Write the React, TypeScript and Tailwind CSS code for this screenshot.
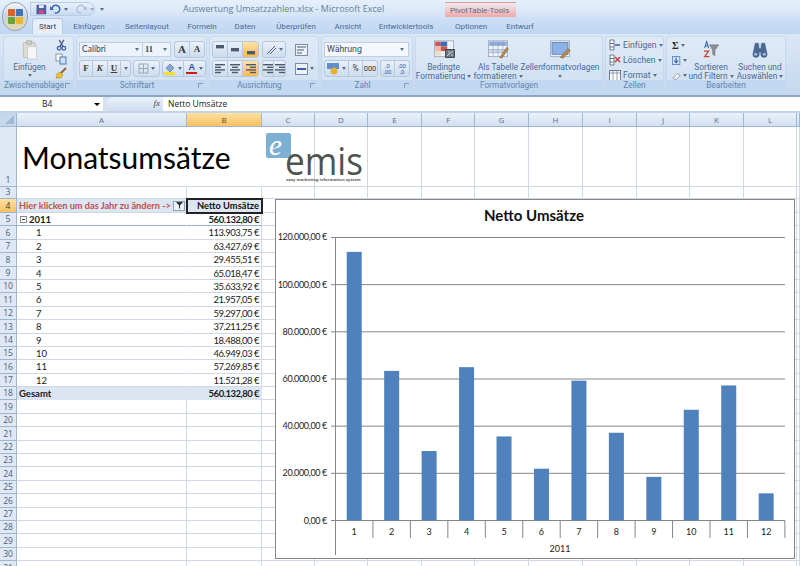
import React from "react";

const UI = "font-['Roboto',sans-serif]";
const COLS = [
  ["A", 170], ["B", 75], ["C", 53], ["D", 53], ["E", 54], ["F", 53], ["G", 54], ["H", 54], ["I", 54], ["J", 53], ["K", 54], ["L", 53], ["", 3],
] as const;
const TABS = [
  ["Einfügen", 52], ["Seitenlayout", 64], ["Formeln", 46], ["Daten", 40], ["Überprüfen", 62], ["Ansicht", 42], ["Entwicklertools", 74], ["Optionen", 56], ["Entwurf", 42],
] as const;
const MONTHS = [
  ["1", "113.903,75 €", 113903], ["2", "63.427,69 €", 63427], ["3", "29.455,51 €", 29455], ["4", "65.018,47 €", 65018],
  ["5", "35.633,92 €", 35633], ["6", "21.957,05 €", 21957], ["7", "59.297,00 €", 59297], ["8", "37.211,25 €", 37211],
  ["9", "18.488,00 €", 18488], ["10", "46.949,03 €", 46949], ["11", "57.269,85 €", 57269], ["12", "11.521,28 €", 11521],
] as const;
const CHART_FONT = "Lato, sans-serif";

function Caret({ className = "" }: { className?: string }) {
  return <span className={`inline-block w-0 h-0 align-middle border-x-[2px] border-x-transparent border-t-[3px] border-t-[#5a6f8c] ${className}`} />;
}

function Group({ width, label, launcher, children }: { width: number; label: string; launcher?: boolean; children: React.ReactNode }) {
  return (
    <div style={{ width }} className="shrink-0 flex flex-col rounded-[3px] border border-[#c5d8ee] bg-gradient-to-b from-[#dfeaf7] to-[#cfe0f3]">
      <div className="flex-1 min-h-0">{children}</div>
      <div className={`relative h-[11px] rounded-b-[3px] bg-[#c2d8f0] text-center text-[8.3px] leading-[11px] text-[#6486ad] ${launcher ? "pr-[9px]" : ""}`}>
        {label}
        {launcher && <span className="absolute right-[3px] top-[3px] w-[5px] h-[5px] border-l border-t border-[#7f9bbd]" />}
      </div>
    </div>
  );
}

function Btn({ width, children, active }: { width: number; children?: React.ReactNode; active?: boolean }) {
  return (
    <div style={{ width }} className={`h-[15px] flex items-center justify-center gap-[2px] border-r border-[#b4c8e0] last:border-r-0 text-[9px] text-[#3a3a3a] ${active ? "bg-gradient-to-b from-[#fde3a8] to-[#f8b84e]" : ""}`}>
      {children}
    </div>
  );
}

function BtnRow({ children }: { children: React.ReactNode }) {
  return <div className="flex rounded-[3px] border border-[#b4c8e0] bg-gradient-to-b from-[#eaf1fa] to-[#cddcef] overflow-hidden">{children}</div>;
}

function Lines({ kind }: { kind: "top" | "mid" | "bot" | "l" | "c" | "r" }) {
  const rows: Record<string, number[][]> = {
    top: [[1, 9], [1, 9], [1, 9]],
    mid: [[1, 9], [1, 9], [1, 9]],
    bot: [[1, 9], [1, 9], [1, 9]],
    l: [[0, 10], [0, 6], [0, 10], [0, 6]],
    c: [[0, 10], [2, 8], [0, 10], [2, 8]],
    r: [[0, 10], [4, 10], [0, 10], [4, 10]],
  };
  const y0 = kind === "top" ? 0 : kind === "mid" ? 3 : kind === "bot" ? 6 : 0;
  return (
    <svg width="10" height="10" viewBox="0 0 10 10">
      {rows[kind].map(([a, b], i) => (
        <rect key={i} x={a} y={kind === "top" || kind === "mid" || kind === "bot" ? y0 + i : i * 2.6} width={b - a} height="1.4" fill="#4d5a6b" />
      ))}
    </svg>
  );
}

function StyleIcon({ kind }: { kind: number }) {
  return (
    <svg width="24" height="19" viewBox="0 0 30 24" preserveAspectRatio="none">
      <rect x="3" y="1" width="24" height="20" fill="#eef3fa" stroke="#9aa8b8" />
      {kind === 0 && (
        <>
          <rect x="4" y="2" width="7" height="6" fill="#c9584f" /><rect x="11" y="2" width="8" height="6" fill="#3a6fb8" />
          <rect x="4" y="8" width="7" height="6" fill="#f0b8a8" /><rect x="11" y="8" width="8" height="6" fill="#c9584f" />
          <rect x="4" y="14" width="7" height="6" fill="#e8e0c0" />
          <rect x="17" y="12" width="11" height="10" fill="#6b7684" stroke="#333" /><path d="M19 20l7-6M20 15h2M24 19h2" stroke="#fff" />
        </>
      )}
      {kind === 1 && (
        <>
          <rect x="4" y="2" width="22" height="5" fill="#8faadc" />
          <rect x="4" y="12" width="22" height="4" fill="#c9d8ee" />
          <path d="M3 7h24M3 12h24M3 16h24M9 1v20M15 1v20M21 1v20" stroke="#8d9db5" strokeWidth=".7" />
          <path d="M17 22l9-13 2 2-8 12z" fill="#b98a4e" stroke="#6a5230" strokeWidth=".5" />
        </>
      )}
      {kind === 2 && (
        <>
          <rect x="5" y="3" width="20" height="15" fill="#8fb2e6" stroke="#4f79b5" />
          <path d="M15 22l10-11 3 2-9 10z" fill="#b98a4e" stroke="#6a5230" strokeWidth=".5" />
        </>
      )}
    </svg>
  );
}

function Ribbon() {
  const big = "flex flex-col items-center text-[8.3px] leading-[8.5px] text-center text-[#4a6a94]";
  return (
    <div className="h-[63px] flex gap-[2px] px-[3px] pt-[2px] pb-[3px] bg-gradient-to-b from-[#dbe7f6] to-[#c4d8ef] border-b-[2px] border-[#8ba6c7]">
      <Group width={71} label="Zwischenablage" launcher>
        <div className="flex h-full">
          <div className="w-[51px] flex flex-col items-center pt-[3px]">
            <svg width="18" height="20" viewBox="0 0 20 24">
              <rect x="2" y="3" width="14" height="18" rx="1" fill="#dedbd2" stroke="#b8b8b0" />
              <rect x="6" y="1" width="6" height="4" fill="#d0ccc0" stroke="#b0b0a8" />
              <path d="M9 8h9v15H7V8z" fill="#f6f6f6" stroke="#c0c6d0" />
            </svg>
            <div className="text-[8.3px] leading-[10px] mt-[2px] text-[#4a6a94]">Einfügen</div>
            <Caret className="mt-[2px]" />
          </div>
          <div className="flex flex-col items-center gap-[2px] pt-[2px]">
            <svg width="11" height="12" viewBox="0 0 11 13"><path d="M3 1l4 7M8 1L4 8" stroke="#55617a" strokeWidth="1.4" /><circle cx="3" cy="10" r="2" fill="none" stroke="#3a5fa8" strokeWidth="1.4" /><circle cx="8" cy="10" r="2" fill="none" stroke="#3a5fa8" strokeWidth="1.4" /></svg>
            <svg width="12" height="12" viewBox="0 0 12 12"><rect x="1" y="1" width="6" height="7" fill="#fff" stroke="#8a97a8" /><rect x="5" y="4" width="6" height="7" fill="#cfe0f5" stroke="#4f79b5" /></svg>
            <svg width="12" height="12" viewBox="0 0 12 12"><path d="M11 1L6 6" stroke="#8a6a30" strokeWidth="2" /><path d="M2 7l3-2 3 3-2 3-5 0z" fill="#f0c040" stroke="#a88020" strokeWidth=".6" /></svg>
          </div>
        </div>
      </Group>
      <Group width={131} label="Schriftart" launcher>
        <div className="flex flex-col gap-[2px] pt-[4px] pl-[2px]">
          <div className="flex items-center">
            <div className="w-[64px] h-[15px] flex items-center justify-between pl-[2px] pr-[3px] bg-[#edf3fb] border border-[#c0d0e4] text-[8.5px] text-[#3a4656]"><span className="font-['Lato',sans-serif]">Calibri</span><Caret /></div>
            <div className="w-[28px] h-[15px] flex items-center justify-between pl-[2px] pr-[3px] bg-[#edf3fb] border border-l-0 border-[#c0d0e4] text-[8.5px] font-['Liberation_Serif',serif] font-bold text-[#3a4656]">11<Caret /></div>
            <div className="ml-[3px]"><BtnRow>
              <Btn width={15}><span className="font-['Liberation_Serif',serif] font-bold text-[11px] leading-none">A</span></Btn>
              <Btn width={14}><span className="font-['Liberation_Serif',serif] font-bold text-[9px] leading-none">A</span></Btn>
            </BtnRow></div>
          </div>
          <div className="flex items-center gap-[2px]">
            <BtnRow>
              <Btn width={13}><span className="font-['Liberation_Serif',serif] font-bold">F</span></Btn>
              <Btn width={15}><span className="font-['Liberation_Serif',serif] font-bold italic">K</span></Btn>
              <Btn width={14}><span className="font-['Liberation_Serif',serif] font-bold underline">U</span></Btn>
              <Btn width={9}><Caret /></Btn>
            </BtnRow>
            <BtnRow>
              <Btn width={25}>
                <svg width="11" height="11" viewBox="0 0 11 11"><path d="M1 1h9v9H1zM5.500 1v9M1 5.500h9" fill="none" stroke="#9aa8bc" /></svg>
                <Caret />
              </Btn>
            </BtnRow>
            <BtnRow>
              <Btn width={22}>
                <svg width="12" height="12" viewBox="0 0 12 12"><path d="M6 1l4 4-4 4-4-4z" fill="#8aa8d0" stroke="#556" strokeWidth=".5" /><rect x="0" y="9" width="11" height="3" fill="#f5e020" /></svg>
                <Caret />
              </Btn>
              <Btn width={21}>
                <span className="flex flex-col items-center"><span className="text-[#2a4f9a] font-bold text-[9px] leading-[8px] font-['Liberation_Sans',sans-serif]">A</span><span className="w-[11px] h-[2px] bg-[#d01818] mt-[1px]" /></span>
                <Caret />
              </Btn>
            </BtnRow>
          </div>
        </div>
      </Group>
      <Group width={110} label="Ausrichtung" launcher>
        <div className="flex gap-[3px] pt-[4px] pl-[2px]">
          <div className="flex flex-col gap-[2px]">
            <BtnRow><Btn width={15}><Lines kind="top" /></Btn><Btn width={15}><Lines kind="mid" /></Btn><Btn width={15} active><Lines kind="bot" /></Btn></BtnRow>
            <BtnRow><Btn width={15}><Lines kind="l" /></Btn><Btn width={15}><Lines kind="c" /></Btn><Btn width={15} active><Lines kind="r" /></Btn></BtnRow>
          </div>
          <div className="flex flex-col gap-[2px]">
            <BtnRow><Btn width={22}><svg width="11" height="11" viewBox="0 0 11 11"><path d="M1 10l8-8M4 10l6-6" stroke="#55617a" /></svg><Caret /></Btn></BtnRow>
            <BtnRow><Btn width={11}><Lines kind="r" /></Btn><Btn width={11}><Lines kind="r" /></Btn></BtnRow>
          </div>
          <div className="flex flex-col gap-[2px] pl-[6px]">
            <div className="h-[17px] flex items-center"><svg width="13" height="12" viewBox="0 0 13 12"><rect x=".5" y=".5" width="12" height="11" fill="#eef3fa" stroke="#7d8da3" /><path d="M2 3h9M2 6h7M2 9h5" stroke="#4d5a6b" /></svg></div>
            <div className="h-[17px] flex items-center gap-[2px]"><svg width="13" height="12" viewBox="0 0 13 12"><rect x=".5" y=".5" width="12" height="11" fill="#eef3fa" stroke="#7d8da3" /><path d="M2 6h9" stroke="#3a5fa8" strokeWidth="2" /></svg><Caret /></div>
          </div>
        </div>
      </Group>
      <Group width={92} label="Zahl" launcher>
        <div className="flex flex-col gap-[3px] pt-[5px] pl-[2px]">
          <div className="w-[85px] h-[15px] flex items-center justify-between pl-[2px] pr-[4px] bg-[#f4f7fc] border border-[#c0d0e4] text-[8.8px] text-[#3a4656]">Währung<Caret /></div>
          <div className="flex gap-[2px]">
            <BtnRow>
              <Btn width={24}><svg width="13" height="12" viewBox="0 0 13 12"><rect x="0" y="0" width="12" height="6" fill="#5f8fd0" /><circle cx="7" cy="8" r="3.500" fill="#e8b030" /></svg><Caret /></Btn>
              <Btn width={14}><span className="text-[8.5px]">%</span></Btn>
              <Btn width={14}><span className="text-[7.5px]">000</span></Btn>
            </BtnRow>
            <BtnRow>
              <Btn width={14}><span className="text-[6px] leading-[6px] text-center text-[#3a5fa8]">,0<br />,00</span></Btn>
              <Btn width={14}><span className="text-[6px] leading-[6px] text-center text-[#3a5fa8]">,00<br />,0</span></Btn>
            </BtnRow>
          </div>
        </div>
      </Group>
      <Group width={188} label="Formatvorlagen">
        <div className="flex pt-[3px]">
          <div className={`w-[55px] ${big}`}>
            <StyleIcon kind={0} />
            <div className="whitespace-nowrap mt-[4px]">Bedingte<br />Formatierung <Caret /></div>
          </div>
          <div className={`w-[54px] ${big}`}>
            <StyleIcon kind={1} />
            <div className="whitespace-nowrap mt-[4px]">Als Tabelle<br />formatieren <Caret /></div>
          </div>
          <div className={`w-[70px] ${big}`}>
            <StyleIcon kind={2} />
            <div className="whitespace-nowrap mt-[4px]">Zellenformatvorlagen<br /><Caret /></div>
          </div>
        </div>
      </Group>
      <Group width={59} label="Zellen">
        <div className="flex flex-col gap-[3px] pt-[2px] pl-[3px] text-[8.6px] leading-[12px] text-[#4a6a94]">
          <div className="flex items-center gap-[2px] whitespace-nowrap"><svg width="12" height="12" viewBox="0 0 12 12"><path d="M1 1h4v10H1zM1 4.500h4M1 8h4" fill="#fff" stroke="#6a7a90" /><path d="M6 6h5" stroke="#3a5fa8" strokeWidth="1.500" /></svg>Einfügen <Caret /></div>
          <div className="flex items-center gap-[2px] whitespace-nowrap"><svg width="12" height="12" viewBox="0 0 12 12"><path d="M1 1h4v10H1zM1 4.500h4M1 8h4" fill="#fff" stroke="#6a7a90" /><path d="M6 3l5 5M11 3L6 8" stroke="#d04040" strokeWidth="1.500" /></svg>Löschen <Caret /></div>
          <div className="flex items-center gap-[2px] whitespace-nowrap"><svg width="12" height="12" viewBox="0 0 12 12"><rect x=".5" y="1.500" width="11" height="10" fill="#fff" stroke="#6a7a90" /><path d="M1 4h10M4 2v9M8 2v9" stroke="#6a7a90" strokeWidth=".7" /></svg>Format <Caret /></div>
        </div>
      </Group>
      <Group width={120} label="Bearbeiten">
        <div className="flex">
          <div className="w-[20px] shrink-0 flex flex-col gap-[2px] pl-[5px] pt-[2px]">
            <div className="flex items-center h-[13px] gap-[2px] font-['Liberation_Serif',serif] font-bold text-[10px] leading-none text-[#222]">Σ<Caret /></div>
            <div className="flex items-center h-[13px] gap-[2px]"><svg width="10" height="11" viewBox="0 0 12 12"><rect x=".5" y=".5" width="10" height="11" fill="#cfe0f5" stroke="#4f79b5" /><path d="M5.500 2v6M3 6l2.500 3L8 6" stroke="#2a5fb0" fill="none" strokeWidth="1.400" /></svg><Caret /></div>
            <div className="flex items-center h-[13px] gap-[2px]"><svg width="11" height="10" viewBox="0 0 12 11"><path d="M1 8l6-6 4 3-5 5H3z" fill="#f4f4f4" stroke="#7a8494" /></svg><Caret /></div>
          </div>
          <div className={`w-[48px] shrink-0 pt-[3px] ${big}`}>
            <svg width="22" height="19" viewBox="0 0 22 24">
              <path d="M9 6h12l-5 7v7l-3-2v-5z" fill="#8a9096" stroke="#666" strokeWidth=".5" />
              <path d="M3 10l2.500-8L8 10M4 7.500h3" fill="none" stroke="#3a5fa8" strokeWidth="1.300" />
              <path d="M2 14h6l-5 7h6" fill="none" stroke="#c8402a" strokeWidth="1.500" />
            </svg>
            <div className="whitespace-nowrap mt-[4px]">Sortieren<br />und Filtern <Caret /></div>
          </div>
          <div className={`w-[50px] shrink-0 pt-[3px] ${big}`}>
            <svg width="20" height="19" viewBox="0 0 22 24">
              <path d="M5 4h4l1 7h2l1-7h4l3 14a3 3 0 0 1-8 0v-3h-2v3a3 3 0 0 1-8 0z" fill="#4a6a94" stroke="#2f4566" strokeWidth=".5" />
              <circle cx="5.500" cy="18" r="2" fill="#9fb8d8" /><circle cx="16.500" cy="18" r="2" fill="#9fb8d8" />
            </svg>
            <div className="whitespace-nowrap mt-[4px]">Suchen und<br />Auswählen <Caret /></div>
          </div>
        </div>
      </Group>
    </div>
  );
}

function Header() {
  return (
    <div className={`${UI} relative`}>
      <div className="h-[17px] flex bg-gradient-to-b from-[#e6f0fb] to-[#d4e4f6] text-[9px] leading-[17px] text-[#6a7f9c]">
        <div className="w-[183px] shrink-0 flex items-start pl-[30px] pt-[2px]">
          <div className="h-[14px] w-[65px] flex items-center gap-[3px] pl-[5px] rounded-r-full border border-[#b9cde5] bg-gradient-to-b from-[#e9f1fb] to-[#c8daf0]">
            <svg width="11" height="11" viewBox="0 0 11 11"><rect x=".5" y=".5" width="10" height="10" rx="1" fill="#4a5fa0" /><rect x="3" y="1" width="5" height="3" fill="#e4e9f4" /><rect x="3" y="6" width="5" height="4" fill="#c64a8a" /></svg>
            <svg width="12" height="10" viewBox="0 0 12 10"><path d="M2 5a4 4 0 1 1 3 4" fill="none" stroke="#3b69b3" strokeWidth="1.600" /><path d="M0 2v4h4z" fill="#3b69b3" /></svg>
            <Caret />
            <svg className="ml-[4px]" width="12" height="10" viewBox="0 0 12 10"><path d="M10 5a4 4 0 1 0-3 4" fill="none" stroke="#b3bfd0" strokeWidth="1.300" /><path d="M12 2v4H8z" fill="#b3bfd0" /></svg>
            <Caret className="opacity-50" />
          </div>
          <Caret className="ml-[5px] mt-[6px]" />
        </div>
        <div className="w-[262px] shrink-0 font-['Open_Sans',sans-serif]">Auswertung Umsatzzahlen.xlsx - Microsoft Excel</div>
        <div className="w-[71px] shrink-0 mt-[2px] h-[15px] pl-[5px] text-[8px] leading-[15px] text-[#5e6f86] bg-gradient-to-b from-[#eceaf2] to-[#f0a9a9] border-t border-[#e59a9a]">PivotTable-Tools</div>
      </div>
      <div className="h-[17px] flex items-end pl-[32px] bg-gradient-to-b from-[#cfe0f5] to-[#bfd6f2] text-[8px] leading-[15px] text-[#4a6a94]">
        <div className="w-[31px] h-[16px] text-center rounded-t-[3px] bg-[#e6eff9] border border-b-0 border-[#b4c9e3] text-[#2a3f5f]">Start</div>
        {TABS.map(([t, w]) => (
          <div key={t} style={{ width: w }} className="h-[15px] text-center shrink-0">{t}</div>
        ))}
      </div>
      <Ribbon />
      <div className="h-[14px] flex items-center bg-[#d5e2f2] text-[8.5px] text-[#222] font-['Open_Sans',sans-serif]">
        <div className="w-[103px] h-full bg-white flex items-center justify-between pl-[42px] pr-[3px]"><span>B4</span><span className="w-0 h-0 border-x-[3px] border-x-transparent border-t-[3px] border-t-black" /></div>
        <div className="w-[57px] ml-[3px] h-full flex items-center justify-end pr-[3px] rounded-l-full bg-gradient-to-b from-[#eaf1fa] to-[#cfdef0]"><span className="font-['Liberation_Serif',serif] italic text-[9px] text-[#444]">fx</span></div>
        <div className="flex-1 h-full bg-white pl-[5px] leading-[14px]">Netto Umsätze</div>
      </div>
      <div className="h-[2px] bg-[#c4d3e6]" />
    </div>
  );
}

function Cell({ width, className = "", children }: { width: number; className?: string; children?: React.ReactNode }) {
  return <div style={{ width }} className={`shrink-0 h-full whitespace-nowrap border-r border-b border-[#d0d7e5] ${className}`}>{children}</div>;
}

function Row({ num, h, active, a, b, aClass = "", bClass = "" }: { num: string; h: string; active?: boolean; a?: React.ReactNode; b?: React.ReactNode; aClass?: string; bClass?: string }) {
  return (
    <div className={`flex ${h}`}>
      <div className={`w-[17px] shrink-0 flex items-end justify-center text-[8.5px] leading-[12px] border-r border-b border-[#9eb6ce] ${active ? "bg-gradient-to-b from-[#fde0a0] to-[#f9c160] text-[#3a3a3a]" : "bg-[#dfe8f4] text-[#47617f]"} font-['Open_Sans',sans-serif]`}>{num}</div>
      <Cell width={170} className={aClass}>{a}</Cell>
      <Cell width={75} className={bClass}>{b}</Cell>
      {COLS.slice(2).map(([c, w]) => <Cell key={c} width={w} />)}
    </div>
  );
}

function Sheet() {
  const rows: number[] = [];
  for (let i = 19; i <= 31; i++) rows.push(i);
  const txt = "text-[9.5px] leading-[13px] text-[#1a1a1a]";
  const num = "tracking-[-0.5px] text-right pr-[2px]";
  return (
    <div className="relative flex-1 overflow-hidden font-['Lato',sans-serif]">
      <div className="flex h-[14px] font-['Open_Sans',sans-serif] text-[8px] leading-[14px] text-center text-[#54708f]">
        <div className="w-[17px] shrink-0 bg-[#c5d8ee] border-r border-b border-[#9eb6ce] relative">
          <span className="absolute right-[2px] bottom-[2px] w-0 h-0 border-l-[9px] border-l-transparent border-b-[9px] border-b-[#a0bad6]" />
        </div>
        {COLS.map(([c, w]) => (
          <div key={c} style={{ width: w }} className={`shrink-0 border-r border-b border-[#9eb6ce] ${c === "B" ? "bg-gradient-to-b from-[#fde0a0] to-[#f9c160] text-[#5f4a1e]" : "bg-gradient-to-b from-[#e9f0f9] to-[#d3e0f0]"}`}>{c}</div>
        ))}
      </div>
      <Row num="1" h="h-[60px]" aClass="!border-r-transparent" bClass="!border-r-transparent" a={<div className="pl-[5px] pt-[11px] text-[30px] leading-[38px] text-black">Monatsumsätze</div>} />
      <Row num="3" h="h-[12px]" />
      <Row
        num="4" h="h-[14px]" active
        aClass="bg-[#dce6f1] flex items-center justify-between pl-[2px] pr-[1px]"
        a={<>
          <span className="text-[9.2px] font-bold text-[#c0504d]">Hier klicken um das Jahr zu ändern -&gt;</span>
          <span className="w-[12px] h-[10px] flex items-center justify-center border border-[#8fa0b5] bg-[#eef2f8]"><svg width="7" height="7" viewBox="0 0 7 7"><path d="M0 0h7L4 3.500V7L3 6V3.500z" fill="#333" /></svg></span>
        </>}
        bClass="relative bg-[#dce6f1] text-right pr-[2px] text-[9.3px] leading-[13px] font-bold text-[#111] outline-2 -outline-offset-1 outline-[#222]"
        b="Netto Umsätze"
      />
      <Row
        num="5" h="h-[13.4px]"
        aClass={`${txt} font-bold !border-b-[#95b3d7] !border-r-transparent flex items-center gap-[2px] pl-[3px]`}
        a={<><span className="w-[7px] h-[7px] flex items-center justify-center border border-[#888] bg-white"><span className="w-[3px] h-px bg-[#333]" /></span>2011</>}
        bClass={`${txt} ${num} font-bold !border-b-[#95b3d7]`}
        b="560.132,80 €"
      />
      {MONTHS.map(([m, v], i) => (
        <Row key={m} num={String(i + 6)} h="h-[13.4px]" aClass={`${txt} pl-[19px] !border-r-transparent`} a={m} bClass={`${txt} ${num}`} b={v} />
      ))}
      <Row
        num="18" h="h-[13.4px]"
        aClass={`${txt} font-bold bg-[#dce6f1] pl-[2px] !border-[#dce6f1]`}
        a="Gesamt"
        bClass={`${txt} ${num} font-bold bg-[#dce6f1] !border-[#dce6f1]`}
        b="560.132,80 €"
      />
      {rows.map((n) => <Row key={n} num={String(n)} h="h-[13.4px]" />)}

      <div className="absolute left-[262px] top-[15px] w-[104px] h-[58px]">
        <svg width="104" height="58" viewBox="0 0 104 58">
          <rect x="4" y="5" width="25" height="25" rx="2" fill="#7eb0d4" />
          <text x="7" y="27" fontFamily="Liberation Serif, serif" fontStyle="italic" fontSize="29" fill="#fff">e</text>
          <text x="23" y="47" fontFamily="Open Sans, sans-serif" fontSize="38" textLength="78" lengthAdjust="spacingAndGlyphs" fill="#4e534e">emis</text>
          <text x="24" y="53" fontFamily="Open Sans, sans-serif" fontWeight="700" fontSize="4.200" fill="#5a5e5a">easy marketing information system</text>
        </svg>
      </div>
      <Chart />
    </div>
  );
}

function Chart() {
  // coordinates are page pixels minus the chart's own corner
  const ox = 275, oy = 199;
  const y0 = 520.5, perTick = 47.17;
  const ticks = ["0,00 €", "20.000,00 €", "40.000,00 €", "60.000,00 €", "80.000,00 €", "100.000,00 €", "120.000,00 €"];
  const x0 = 335.5, step = 37.45;
  return (
    <div className="absolute left-[275px] top-[86px] w-[520px] h-[360px] bg-white border border-[#868686]">
      <svg width="518" height="358" viewBox={`${ox + 1} ${oy + 1} 518 358`}>
        <text x="534" y="221" textAnchor="middle" fontFamily={CHART_FONT} fontWeight="700" fontSize="15" fill="#111">Netto Umsätze</text>
        {ticks.map((t, i) => {
          const y = y0 - i * perTick;
          return (
            <g key={t}>
              <line x1="331" x2="785" y1={y} y2={y} stroke="#868686" />
              <text x="327" y={y + 3} textAnchor="end" fontFamily={CHART_FONT} fontSize="9" letterSpacing="-0.35" fill="#222">{t}</text>
            </g>
          );
        })}
        {MONTHS.map(([m, , v], i) => {
          const h = (v / 20000) * perTick;
          const cx = x0 + step * (i + 0.5);
          return (
            <g key={m}>
              <rect x={cx - 7.500} y={y0 - h} width="15" height={h} fill="#4f81bd" />
              <text x={cx} y="535" textAnchor="middle" fontFamily={CHART_FONT} fontSize="9" fill="#222">{m}</text>
              <line x1={x0 + step * (i + 1)} x2={x0 + step * (i + 1)} y1={y0} y2="538" stroke="#868686" />
            </g>
          );
        })}
        <line x1={x0} x2={x0} y1="237" y2="555" stroke="#868686" />
        <text x="560" y="552" textAnchor="middle" fontFamily={CHART_FONT} fontSize="9" fill="#222">2011</text>
      </svg>
    </div>
  );
}

export default function App() {
  return (
    <div className="w-[800px] h-[566px] overflow-hidden flex flex-col bg-white relative">
      <Header />
      <Sheet />
      <div className="absolute left-[2px] top-[2px] w-[26px] h-[29px] rounded-full border border-[#8fa3bd] bg-gradient-to-b from-[#f4f6f8] via-[#c9d4df] to-[#e8d9a8] flex items-center justify-center">
        <svg width="15" height="15" viewBox="0 0 17 17">
          <rect x="0" y="0" width="8" height="8" rx="1" fill="#d9622b" />
          <rect x="9" y="0" width="8" height="8" rx="1" fill="#3f74b8" />
          <rect x="0" y="9" width="8" height="8" rx="1" fill="#6ea33a" />
          <rect x="9" y="9" width="8" height="8" rx="1" fill="#e7b62f" />
        </svg>
      </div>
    </div>
  );
}
